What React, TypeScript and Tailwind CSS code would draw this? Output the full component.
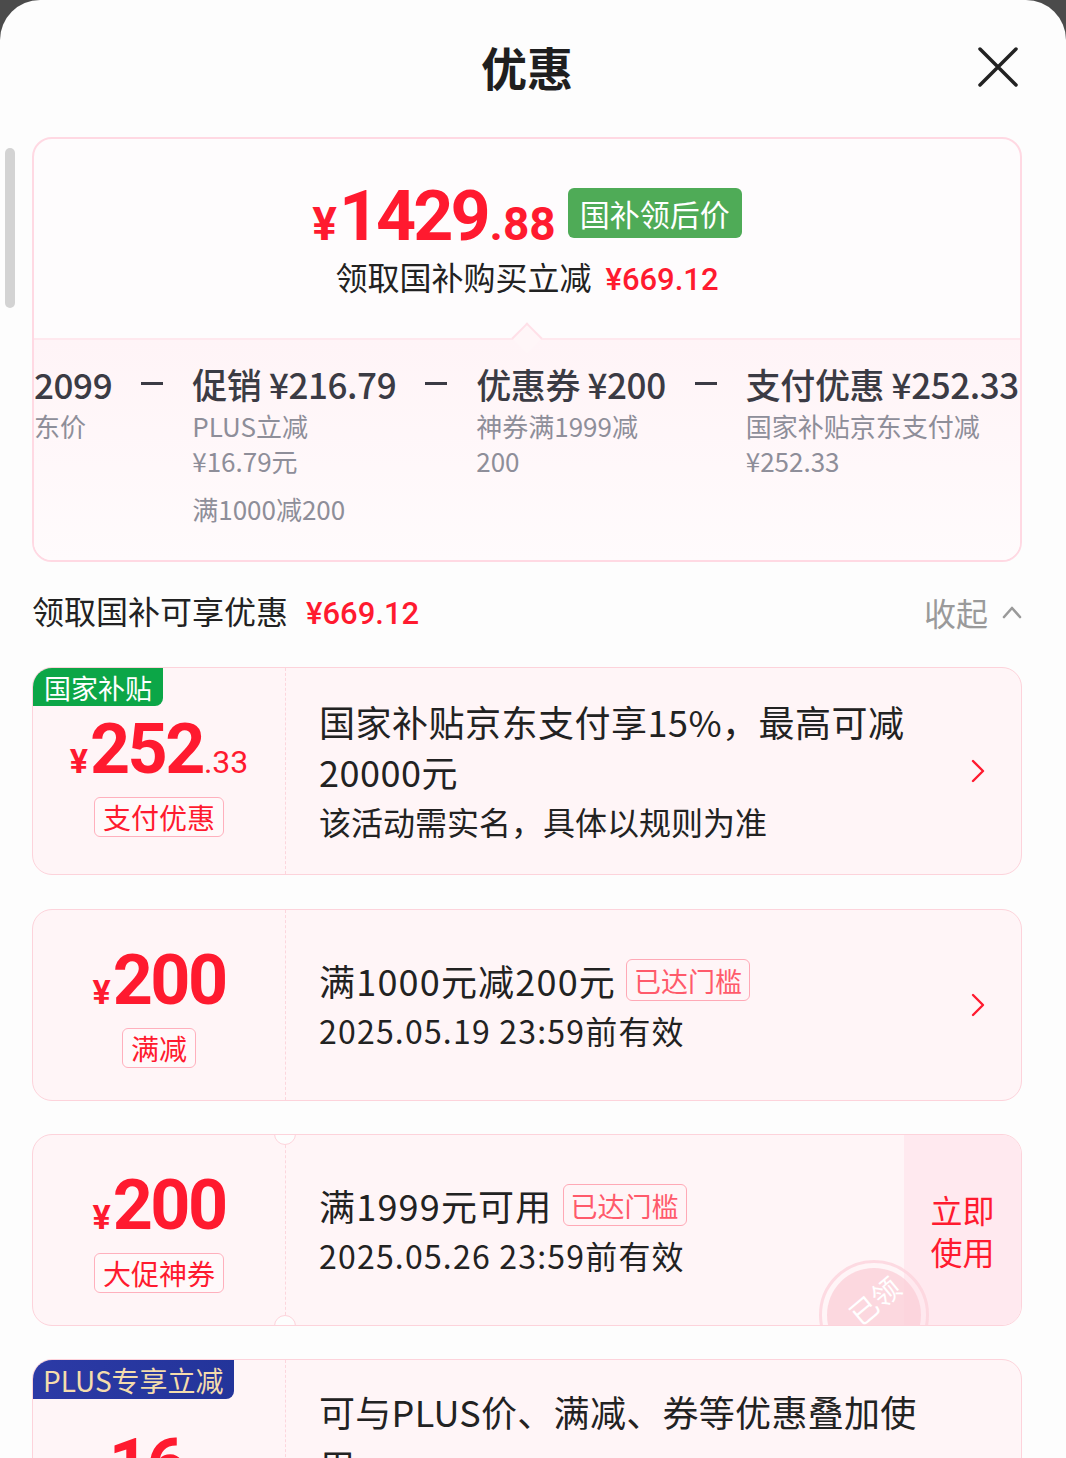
import React from "react";

const ChevronRight = ({ className }: { className?: string }) => (
  <svg className={className} width="14" height="24" viewBox="0 0 14 24" fill="none">
    <path d="M2 2l10 10-10 10" stroke="#ff1a2f" strokeWidth="2.4" strokeLinecap="round" strokeLinejoin="round" />
  </svg>
);

function Price({ int, dec }: { int: string; dec?: string }) {
  return (
    <div className="flex items-baseline text-[#ff1a2f] font-['Roboto',sans-serif]">
      <span className="text-[34px] font-bold mr-[2px]">¥</span>
      <span className="text-[70px] font-bold leading-[60px] tracking-[-2.5px]">{int}</span>
      {dec && <span className="text-[32px] ml-[1px]">.{dec}</span>}
    </div>
  );
}

function Label({ text }: { text: string }) {
  return (
    <div className="mt-[10px] px-[8px] h-[40px] flex items-center rounded-[6px] border border-[#ffb0bd] text-[#ff1a2f] text-[28px] leading-none bg-[#fff9fa]">
      {text}
    </div>
  );
}

function Reached() {
  return (
    <span className="ml-[10px] inline-flex items-center h-[42px] px-[7px] rounded-[6px] border border-[#ffa9b6] text-[#ff5a6b] text-[27px] leading-none tracking-normal">
      已达门槛
    </span>
  );
}

function Step({ title, lines, extra }: { title: string; lines: string[]; extra?: string }) {
  return (
    <div className="flex flex-col whitespace-nowrap">
      <div className="text-[35px] leading-[44px] text-[#3b3b44] font-medium tracking-[-0.4px]">{title}</div>
      <div className="mt-[2px] text-[26px] leading-[35px] text-[#8e8e99]">
        {lines.map((l) => (
          <div key={l}>{l}</div>
        ))}
      </div>
      {extra && <div className="mt-[13px] text-[26px] leading-[35px] text-[#8e8e99]">{extra}</div>}
    </div>
  );
}

const Dash = () => <div className="mt-[20px] w-[22px] h-[3px] bg-[#3b3b44] shrink-0" />;

export default function App() {
  return (
    <div className="h-[1458px] overflow-hidden bg-[#4b4b4b] font-['Noto_Sans_CJK_SC',sans-serif]">
      <div className="relative h-[1458px] bg-[#fdfdfd] rounded-t-[40px] overflow-hidden">
        {/* scrollbar */}
        <div className="absolute left-[5px] top-[148px] w-[10px] h-[160px] rounded-full bg-[#d3d3d3]" />

        <div className="pl-[32px] pr-[44px]">
          {/* header */}
          <div className="relative h-[137px] flex items-center justify-center">
            <h1 className="-mt-[6px] text-[46px] font-bold text-[#1f1f1f] leading-none">优惠</h1>
            <button className="absolute right-[4px] top-[47px] w-[40px] h-[40px]">
              <svg width="40" height="40" viewBox="0 0 40 40">
                <path d="M2 2L38 38M38 2L2 38" stroke="#222" strokeWidth="3.5" strokeLinecap="round" />
              </svg>
            </button>
          </div>

          {/* summary card */}
          <div className="rounded-[20px] border-2 border-[#ffd9e3] overflow-hidden bg-[#fefcfd]">
            <div className="h-[199px] flex flex-col items-center pt-[49px]">
              <div className="flex items-start">
                <div className="flex items-baseline text-[#ff1a2f] font-['Roboto',sans-serif] font-bold leading-[56px]">
                  <span className="text-[46px] mr-[2px]">¥</span>
                  <span className="text-[70px] tracking-[-3px]">1429</span>
                  <span className="text-[46px] ml-[2px]">.88</span>
                </div>
                <div className="ml-[12px] h-[50px] px-[12px] flex items-center rounded-[6px] bg-[#4fab57] text-white text-[30px] leading-none">
                  国补领后价
                </div>
              </div>
              <div className="flex items-baseline text-[32px] text-[#222]">
                <span>领取国补购买立减</span>
                <span className="ml-[14px] text-[31px] text-[#ff1a2f] font-['Roboto',sans-serif] font-medium">¥669.12</span>
              </div>
            </div>
            <div className="relative border-t-2 border-[#ffe8ee] bg-gradient-to-b from-[#fff4f7] to-[#fffbfc] pt-[22px] pb-[34px]">
              <div className="absolute left-1/2 -translate-x-1/2 -top-[13px] w-[22px] h-[22px] rotate-45 bg-[#fff6f8] border-l-2 border-t-2 border-[#ffe0e8]" />
              <div className="flex gap-[29px] items-start">
                <Step title="2099" lines={["东价"]} />
                <Dash />
                <Step title="促销 ¥216.79" lines={["PLUS立减", "¥16.79元"]} extra="满1000减200" />
                <Dash />
                <Step title="优惠券 ¥200" lines={["神券满1999减", "200"]} />
                <Dash />
                <Step title="支付优惠 ¥252.33" lines={["国家补贴京东支付减", "¥252.33"]} />
              </div>
            </div>
          </div>

          {/* section title */}
          <div className="mt-[30px] h-[40px] flex items-center justify-between">
            <div className="flex items-baseline">
              <span className="text-[32px] text-[#222]">领取国补可享优惠</span>
              <span className="ml-[18px] text-[31px] text-[#ff1a2f] font-['Roboto',sans-serif] font-medium">¥669.12</span>
            </div>
            <div className="flex items-center text-[32px] text-[#9a9a9a]">
              <span>收起</span>
              <svg className="ml-[14px]" width="20" height="14" viewBox="0 0 20 14" fill="none">
                <path d="M2 12l8-9 8 9" stroke="#9a9a9a" strokeWidth="2.6" strokeLinecap="round" strokeLinejoin="round" />
              </svg>
            </div>
          </div>

          {/* coupon 1 */}
          <div className="relative mt-[35px] h-[208px] flex rounded-[20px] border-[1.5px] border-[#fdd3db] bg-[#fff5f7] overflow-hidden">
            <div className="absolute left-0 top-0 h-[38px] px-[11px] flex items-center bg-[#0ca647] text-white text-[27px] leading-none rounded-br-[8px]">
              国家补贴
            </div>
            <div className="w-[253px] shrink-0 flex flex-col items-center justify-center pt-[14px] border-r-[1.5px] border-dashed border-[#fcd6dd]">
              <Price int="252" dec="33" />
              <Label text="支付优惠" />
            </div>
            <div className="flex-1 pl-[33px] pr-[10px] flex flex-col justify-center text-[#222]">
              <div className="text-[36px] leading-[50px] tracking-[0.5px]">国家补贴京东支付享15%，最高可减20000元</div>
              <div className="text-[32px] leading-[50px]">该活动需实名，具体以规则为准</div>
            </div>
            <div className="w-[86px] shrink-0 flex items-center justify-center">
              <ChevronRight />
            </div>
          </div>

          {/* coupon 2 */}
          <div className="relative mt-[34px] h-[192px] flex rounded-[20px] border-[1.5px] border-[#fdd3db] bg-[#fff5f7] overflow-hidden">
            <div className="w-[253px] shrink-0 flex flex-col items-center justify-center pt-[8px] border-r-[1.5px] border-dashed border-[#fcd6dd]">
              <Price int="200" />
              <Label text="满减" />
            </div>
            <div className="flex-1 pl-[33px] flex flex-col justify-center text-[#222]">
              <div className="flex items-center text-[36px] leading-[50px] tracking-[1.2px]">
                <span>满1000元减200元</span>
                <Reached />
              </div>
              <div className="text-[32px] leading-[50px] tracking-[1.2px]">2025.05.19 23:59前有效</div>
            </div>
            <div className="w-[86px] shrink-0 flex items-center justify-center">
              <ChevronRight />
            </div>
          </div>

          {/* coupon 3 */}
          <div className="relative mt-[33px] h-[192px] flex rounded-[20px] border-[1.5px] border-[#fdd3db] bg-[#fff5f7] overflow-hidden">
            <div className="absolute left-[241px] -top-[12px] w-[22px] h-[22px] rounded-full bg-[#fdfdfd] border-[1.5px] border-[#fdd3db]" />
            <div className="absolute left-[241px] -bottom-[12px] w-[22px] h-[22px] rounded-full bg-[#fdfdfd] border-[1.5px] border-[#fdd3db]" />
            <div className="w-[253px] shrink-0 flex flex-col items-center justify-center pt-[8px] border-r-[1.5px] border-dashed border-[#fcd6dd]">
              <Price int="200" />
              <Label text="大促神券" />
            </div>
            <div className="flex-1 pl-[33px] flex flex-col justify-center text-[#222]">
              <div className="flex items-center text-[36px] leading-[50px] tracking-[1.2px]">
                <span>满1999元可用</span>
                <Reached />
              </div>
              <div className="text-[32px] leading-[50px] tracking-[1.2px]">2025.05.26 23:59前有效</div>
            </div>
            <div className="w-[117px] shrink-0 flex items-center justify-center bg-[#ffe9ef] text-[#ff1a2f] text-[32px] leading-[42px] text-center">
              立即
              <br />
              使用
            </div>
            <div className="absolute left-[786px] top-[125px] w-[110px] h-[110px] rounded-full border-[3px] border-[#fcd3dc]/80 flex items-center justify-center">
              <div className="w-[94px] h-[94px] rounded-full bg-[#fbcdd7]/75 flex items-start justify-center pt-[18px]">
                <span className="-rotate-[40deg] text-white text-[28px] leading-none">已领</span>
              </div>
            </div>
          </div>

          {/* coupon 4 */}
          <div className="relative mt-[33px] h-[208px] flex rounded-[20px] border-[1.5px] border-[#fdd3db] bg-[#fff5f7] overflow-hidden">
            <div className="absolute left-0 top-0 h-[39px] px-[10px] flex items-center bg-gradient-to-r from-[#2c3aa6] to-[#23349a] text-[#f4dcac] text-[28px] leading-none rounded-br-[8px]">
              PLUS专享立减
            </div>
            <div className="w-[253px] shrink-0 flex flex-col items-center justify-center pt-[60px] border-r-[1.5px] border-dashed border-[#fcd6dd]">
              <Price int="16" dec="79" />
              <Label text="PLUS立减" />
            </div>
            <div className="flex-1 pl-[33px] pr-[10px] pt-[24px] text-[#222]">
              <div className="text-[36px] leading-[54px] tracking-[0.3px]">可与PLUS价、满减、券等优惠叠加使用</div>
            </div>
            <div className="w-[86px] shrink-0 flex items-center justify-center pt-[40px]">
              <ChevronRight />
            </div>
          </div>
        </div>
      </div>
    </div>
  );
}
